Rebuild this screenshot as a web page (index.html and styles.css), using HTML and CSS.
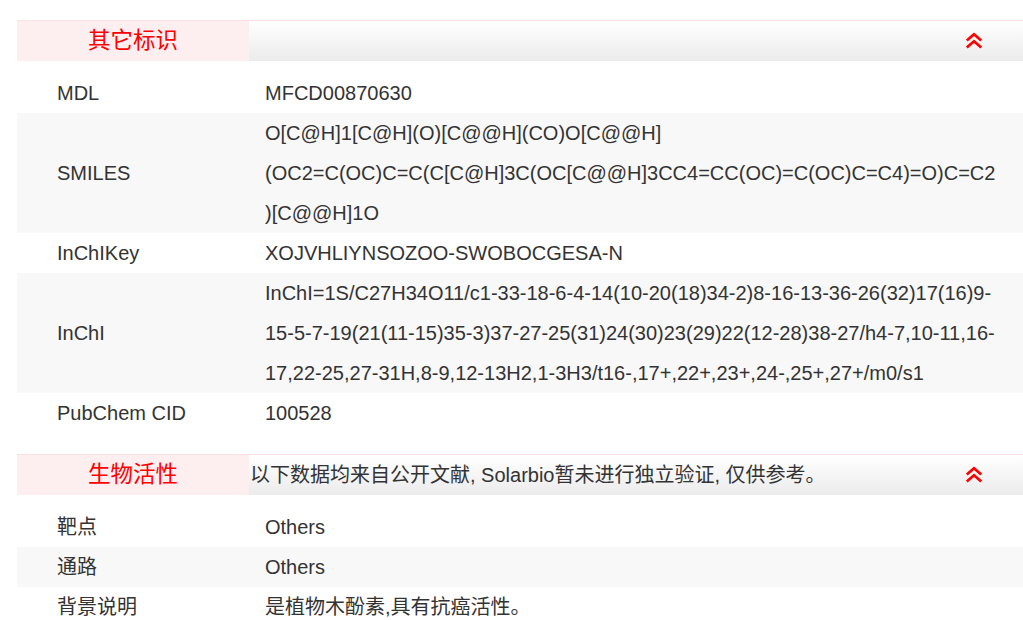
FILE: index.html
```html
<!DOCTYPE html>
<html lang="zh">
<head>
<meta charset="utf-8">
<title>其它标识</title>
<link rel="stylesheet" href="styles.css">
</head>
<body>
<div class="page">
  <section class="block">
    <div class="block-head">
      <div class="block-title">其它标识</div>
      <div class="block-bar">
        <span class="block-note"></span>
        <svg class="chev" width="18" height="18" viewBox="0 0 18 18"><path d="M1.8 8.6 L9 2.2 L16.2 8.6 M1.8 15.6 L9 9.2 L16.2 15.6" fill="none" stroke="#f00" stroke-width="2.7"/></svg>
      </div>
    </div>
    <div class="rows">
      <div class="row"><div class="k">MDL</div><div class="v">MFCD00870630</div></div>
      <div class="row"><div class="k">SMILES</div><div class="v">O[C@H]1[C@H](O)[C@@H](CO)O[C@@H](OC2=C(OC)C=C(C[C@H]3C(OC[C@@H]3CC4=CC(OC)=C(OC)C=C4)=O)C=C2)[C@@H]1O</div></div>
      <div class="row"><div class="k">InChIKey</div><div class="v">XOJVHLIYNSOZOO-SWOBOCGESA-N</div></div>
      <div class="row"><div class="k">InChI</div><div class="v">InChI=1S/C27H34O11/c1-33-18-6-4-14(10-20(18)34-2)8-16-13-36-26(32)17(16)9-15-5-7-19(21(11-15)35-3)37-27-25(31)24(30)23(29)22(12-28)38-27/h4-7,10-11,16-17,22-25,27-31H,8-9,12-13H2,1-3H3/t16-,17+,22+,23+,24-,25+,27+/m0/s1</div></div>
      <div class="row"><div class="k">PubChem CID</div><div class="v">100528</div></div>
    </div>
  </section>
  <section class="block">
    <div class="block-head">
      <div class="block-title">生物活性</div>
      <div class="block-bar">
        <span class="block-note">以下数据均来自公开文献, Solarbio暂未进行独立验证, 仅供参考。</span>
        <svg class="chev" width="18" height="18" viewBox="0 0 18 18"><path d="M1.8 8.6 L9 2.2 L16.2 8.6 M1.8 15.6 L9 9.2 L16.2 15.6" fill="none" stroke="#f00" stroke-width="2.7"/></svg>
      </div>
    </div>
    <div class="rows">
      <div class="row"><div class="k">靶点</div><div class="v">Others</div></div>
      <div class="row"><div class="k">通路</div><div class="v">Others</div></div>
      <div class="row"><div class="k">背景说明</div><div class="v">是植物木酚素,具有抗癌活性。</div></div>
    </div>
  </section>
</div>
</body>
</html>
```
FILE: styles.css
```css
* { box-sizing: border-box; }
html, body { margin: 0; padding: 0; background: #fff; }
body {
  font-family: "Liberation Sans", Arial, "Noto Sans CJK SC", sans-serif;
  font-size: 20px;
  color: #333;
  overflow: hidden;
}
.page {
  padding: 20px 0 0 17px;
  width: 1023px;
}
.block + .block { margin-top: 21px; }
.block-head {
  display: flex;
  border-top: 1px solid #fde0e1;
  height: 41px;
}
.block-title {
  width: 232px;
  flex: none;
  background: #fdeeef;
  color: #f00;
  font-size: 22.5px;
  line-height: 40px;
  text-align: center;
  font-family: "Liberation Sans", "Noto Sans CJK SC", sans-serif;
  font-weight: 400;
}
.block-bar {
  flex: 1;
  display: flex;
  align-items: center;
  justify-content: space-between;
  background: linear-gradient(to bottom, #ffffff, #ebebeb);
  padding-right: 40px;
}
.block-note {
  font-size: 20px;
  line-height: 40px;
  color: #333;
  margin-left: 1px;
}
.chev { display: block; }
.rows { margin-top: 12px; }
.row {
  display: flex;
  align-items: center;
  line-height: 40px;
}
.row:nth-child(even) { background: #f8f8f8; }
.k {
  width: 248px;
  flex: none;
  padding-left: 40px;
}
.v {
  flex: 1;
  min-width: 0;
  padding-right: 23px;
  overflow-wrap: break-word;
}
```
